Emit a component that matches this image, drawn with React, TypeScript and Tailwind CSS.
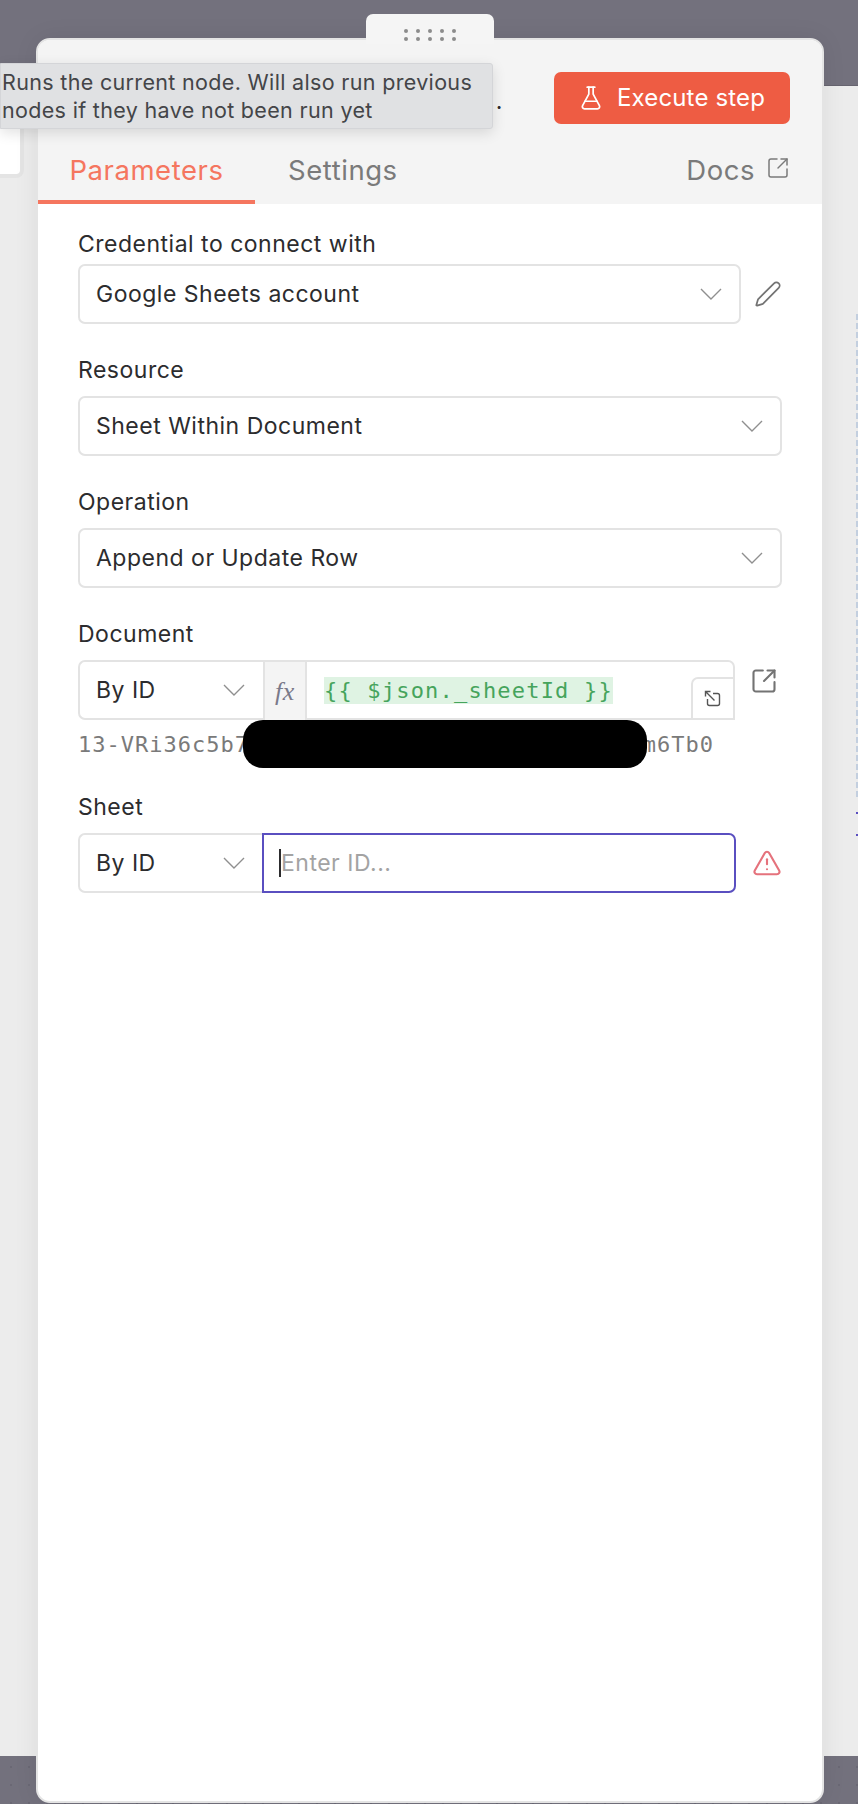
import { FlaskConical, Pen, SquareArrowOutUpRight, TriangleAlert } from 'lucide-react';

function Chevron() {
  return (
    <svg width="22" height="12" viewBox="0 0 22 12" fill="none" className="shrink-0 text-[#8f8f8f]">
      <path d="M1 1l10 10L21 1" stroke="currentColor" strokeWidth="1.4" />
    </svg>
  );
}

function ExpandIcon() {
  return (
    <svg width="18" height="18" viewBox="0 0 18 18" fill="none" stroke="#555" strokeWidth="1.4">
      <path d="M9 3.5h4.5a2 2 0 0 1 2 2v8a2 2 0 0 1-2 2h-8a2 2 0 0 1-2-2V9" />
      <path d="M1.5 1.5l9 9M1.5 6.5v-5h5" />
    </svg>
  );
}

function Select({ value }: { value: string }) {
  return (
    <div className="flex h-[60px] flex-1 items-center justify-between rounded-[7px] border-2 border-[#e3e3e3] pl-4 pr-[17px]">
      <span>{value}</span>
      <Chevron />
    </div>
  );
}

function ModeSelect() {
  return (
    <div className="flex w-[185px] shrink-0 items-center justify-between rounded-l-[7px] border-2 border-r-0 border-[#e3e3e3] pl-4 pr-[18px]">
      <span>By ID</span>
      <Chevron />
    </div>
  );
}

export default function App() {
  return (
    <div className="relative flex h-[1804px] w-[858px] flex-col overflow-hidden bg-[#73717d] font-['Inter',sans-serif] text-[23px] tracking-[0.5px] text-[#2c2c2e]">
      {/* canvas behind the panel */}
      <div className="h-[86px] shrink-0 border-b border-[#66646f]" />
      <div className="relative flex-1 bg-[#ececec]">
        <div className="h-[92px] w-[24px] rounded-br-[8px] border-b-4 border-r-4 border-[#e4e4e4] bg-white" />
        <div className="absolute right-0 top-[228px] h-[486px] w-[2px] bg-[repeating-linear-gradient(to_bottom,#c3cfdf_0,#c3cfdf_6px,transparent_6px,transparent_9px)]" />
        <div className="absolute right-0 top-[726px] h-[2px] w-[2px] bg-[#5a4fc0]" />
        <div className="absolute right-0 top-[748px] h-[2px] w-[2px] bg-[#5a4fc0]" />
      </div>
      <div className="h-[48px] shrink-0 bg-[radial-gradient(circle,#6a6874_1px,transparent_1px)] bg-[size:18px_18px] bg-[position:2px_2px]" />

      {/* node panel */}
      <div className="absolute left-[36px] top-[38px] flex h-[1765px] w-[788px] flex-col overflow-hidden rounded-[14px] border-2 border-[#e4e4e4] bg-white shadow-[0_0_24px_rgba(0,0,0,0.07)]">
        <div className="flex h-[164px] shrink-0 flex-col bg-[#f4f4f4]">
          <div className="flex h-[116px] items-start justify-end pr-[32px] pt-[32px]">
            <span className="mr-[51px] mt-[12px] text-[#2c2c2e]">.</span>
            <button className="flex h-[52px] w-[236px] items-center justify-center gap-[13px] rounded-[7px] bg-[#ee5c43] text-white">
              <FlaskConical size={26} strokeWidth={1.6} />
              <span className="mr-[1px] text-[24px] tracking-[0.15px]">Execute step</span>
            </button>
          </div>
          <div className="flex flex-1 items-stretch text-[27.5px] leading-[28px] tracking-[0.55px] text-[#7a7a7a]">
            <div className="flex w-[217px] justify-center border-b-4 border-[#f5765f] text-[#f5765f]">Parameters</div>
            <div className="ml-[33px]">Settings</div>
            <div className="ml-auto mr-[32px] flex items-start gap-[11px]">
              Docs
              <SquareArrowOutUpRight size={24} strokeWidth={1.5} />
            </div>
          </div>
        </div>

        <div className="flex flex-col pl-[40px] pr-[40px]">
          <div className="mt-[27px] leading-[27px]">Credential to connect with</div>
          <div className="mt-[6px] flex w-[663px] items-center">
            <Select value="Google Sheets account" />
            <Pen size={28} strokeWidth={1.5} className="ml-[13px] mr-[-41px] shrink-0 text-[#737373]" />
          </div>

          <div className="mt-[33px] leading-[27px]">Resource</div>
          <div className="mt-[12px] flex">
            <Select value="Sheet Within Document" />
          </div>

          <div className="mt-[33px] leading-[27px]">Operation</div>
          <div className="mt-[12px] flex">
            <Select value="Append or Update Row" />
          </div>

          <div className="mt-[33px] leading-[27px]">Document</div>
          <div className="relative mt-[12px] flex items-start">
            <div className="flex h-[60px] w-[657px] shrink-0">
              <ModeSelect />
              <div className="flex w-[44px] shrink-0 items-center justify-center border-2 border-b-0 border-[#e3e3e3] bg-[#f4f4f4] font-['Liberation_Serif',serif] text-[26px] italic text-[#7a7a8a]">
                fx
              </div>
              <div className="flex flex-1 items-center rounded-tr-[7px] border-2 border-l-0 border-[#e3e3e3] pl-[17px] font-['DejaVu_Sans_Mono',monospace] text-[22px] tracking-[1.2px] text-[#46a45c]">
                <span className="bg-[#dff3e3] leading-[27px]">{'{{ $json._sheetId }}'}</span>
              </div>
            </div>
            <SquareArrowOutUpRight size={28} strokeWidth={1.8} className="ml-[15px] mt-[7px] text-[#737373]" />
            {/* expand expression button */}
            <div className="absolute left-[613px] top-[17px] flex h-[43px] w-[44px] items-center justify-center rounded-tl-[7px] border-2 border-[#e3e3e3] bg-white">
              <ExpandIcon />
            </div>
          </div>
          <div className="relative mt-[6px] flex h-[36px] w-[658px] items-center justify-between font-['DejaVu_Sans_Mono',monospace] text-[22px] tracking-[1px] text-[#7a7a7a]">
            <span>13-VRi36c5b7</span>
            <span className="mr-[22px]">m6Tb0</span>
            {/* redaction over the id */}
            <div className="absolute left-[165px] top-[-6px] h-[48px] w-[404px] rounded-[20px] bg-black" />
          </div>

          <div className="mt-[32px] leading-[27px]">Sheet</div>
          <div className="mt-[12px] flex h-[60px] items-center">
            <div className="flex h-full w-[658px] shrink-0">
              <ModeSelect />
              <div className="-ml-px flex flex-1 items-center rounded-r-[7px] border-2 border-[#5a4fc0] pl-[15px] text-[#a3a3a3]">
                <span className="h-[28px] w-[2px] bg-[#2c2c2e]" />
                Enter ID...
              </div>
            </div>
            <TriangleAlert size={30} strokeWidth={1.7} className="ml-[16px] text-[#e5727c]" />
          </div>
        </div>
      </div>

      {/* drag handle */}
      <div className="absolute left-[366px] top-[14px] grid h-[30px] w-[128px] grid-cols-[repeat(5,12px)] content-start justify-items-center rounded-t-[7px] bg-[#f5f5f5] pl-[34px] pt-[15px]">
        {Array.from({ length: 10 }).map((_, i) => (
          <span key={i} className="mb-1 block h-1 w-1 rounded-full bg-[#8c8c8c]" />
        ))}
      </div>

      {/* tooltip */}
      <div className="absolute left-0 top-[63px] h-[66px] w-[493px] rounded-r-[3px] border border-[#d4d5d8] bg-[#e0e1e3] pl-[1px] text-[21.5px] leading-[28px] tracking-[0.33px] text-[#444548] shadow-[0_4px_14px_rgba(0,0,0,0.12)]">
        <div className="pt-[4px]">Runs the current node. Will also run previous</div>
        <div>nodes if they have not been run yet</div>
      </div>
    </div>
  );
}
